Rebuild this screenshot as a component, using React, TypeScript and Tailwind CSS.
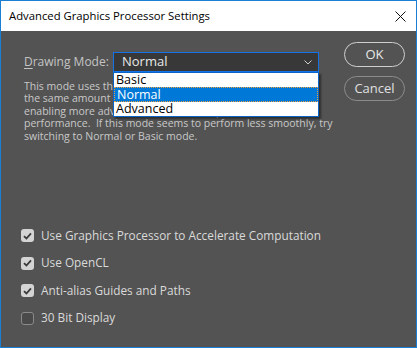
import React from "react";

const font = { fontFamily: '"Open Sans", "Noto Sans", "Liberation Sans", sans-serif' };

function Check({ checked, label }: { checked: boolean; label: string }) {
  return (
    <div className="flex items-center h-[27.5px]">
      {checked ? (
        <div className="w-[13px] h-[13px] rounded-[3px] bg-[#d4d4d4] flex items-center justify-center">
          <svg width="9" height="8" viewBox="0 0 9 8">
            <path d="M1 4.2 L3.4 6.5 L8 1.3" fill="none" stroke="#3a3a3a" strokeWidth="1.8" />
          </svg>
        </div>
      ) : (
        <div className="w-[13px] h-[13px] rounded-[3px] border border-[#8a8a8a] bg-[#4a4a4a]" />
      )}
      <span className="ml-[7px] text-[11.8px] text-[#dadada] leading-none whitespace-nowrap">{label}</span>
    </div>
  );
}

export default function App() {
  return (
    <div className="w-[417px] h-[348px] border border-[#1a7fd4] bg-[#535353] flex flex-col" style={font}>
      <div className="h-[30px] bg-white flex items-center justify-between pl-[8px] pr-[10px] shrink-0">
        <span className="text-[11.3px] text-black">Advanced Graphics Processor Settings</span>
        <svg width="11" height="11" viewBox="0 0 11 11">
          <path d="M0.5 0.5 L10.5 10.5 M10.5 0.5 L0.5 10.5" stroke="#111" strokeWidth="1" />
        </svg>
      </div>
      <div className="flex-1 relative flex flex-col">
        <div className="flex">
          <div className="flex-1 pl-[23px] pt-[21px]">
            <div className="flex items-center">
              <span className="text-[12px] text-[#c4c4c4] w-[89px] whitespace-nowrap">
                <span className="underline underline-offset-2">D</span>rawing Mode:
              </span>
              <div className="relative">
                <div className="w-[206px] h-[20px] border border-[#1473e6] bg-[#383838] flex items-center justify-between pl-[8px] pr-[6px]">
                  <span className="text-[13px] text-[#e8e8e8]">Normal</span>
                  <svg width="8" height="5" viewBox="0 0 8 5">
                    <path d="M0.5 0.5 L4 4 L7.5 0.5" fill="none" stroke="#cfcfcf" strokeWidth="1" />
                  </svg>
                </div>
                <div className="absolute left-0 top-[20px] w-[206px] bg-white border border-[#0a64c8] shadow-[2px_2px_2px_rgba(0,0,0,0.45)] z-10 text-[12.5px] leading-[14px]">
                  <div className="h-[14px] px-[2px] text-black">Basic</div>
                  <div className="h-[15px] px-[2px] bg-[#0078d7] text-white border border-dotted border-[#e8a040]">Normal</div>
                  <div className="h-[14px] px-[2px] text-black">Advanced</div>
                </div>
              </div>
            </div>
            <div className="mt-[8px] text-[10.5px] leading-[12.4px] text-[#c8c8c8] whitespace-nowrap">
              <div>This mode uses the GPU to render images, using</div>
              <div>the same amount of memory as Basic mode, while</div>
              <div>enabling more advanced features to improve</div>
              <div>performance.&nbsp; If this mode seems to perform less smoothly, try</div>
              <div>switching to Normal or Basic mode.</div>
            </div>
          </div>
          <div className="w-[72px] pt-[11px] flex flex-col gap-[9px]">
            <button className="w-[61px] h-[25px] rounded-full border-[1.5px] border-[#cfcfcf] text-[13px] text-[#e8e8e8]">OK</button>
            <button className="w-[61px] h-[25px] rounded-full border border-[#8c8c8c] text-[13px] text-[#e0e0e0]">Cancel</button>
          </div>
        </div>
        <div className="mt-auto mb-[15px] pl-[20px] flex flex-col">
          <Check checked label="Use Graphics Processor to Accelerate Computation" />
          <Check checked label="Use OpenCL" />
          <Check checked label="Anti-alias Guides and Paths" />
          <Check checked={false} label="30 Bit Display" />
        </div>
      </div>
    </div>
  );
}
